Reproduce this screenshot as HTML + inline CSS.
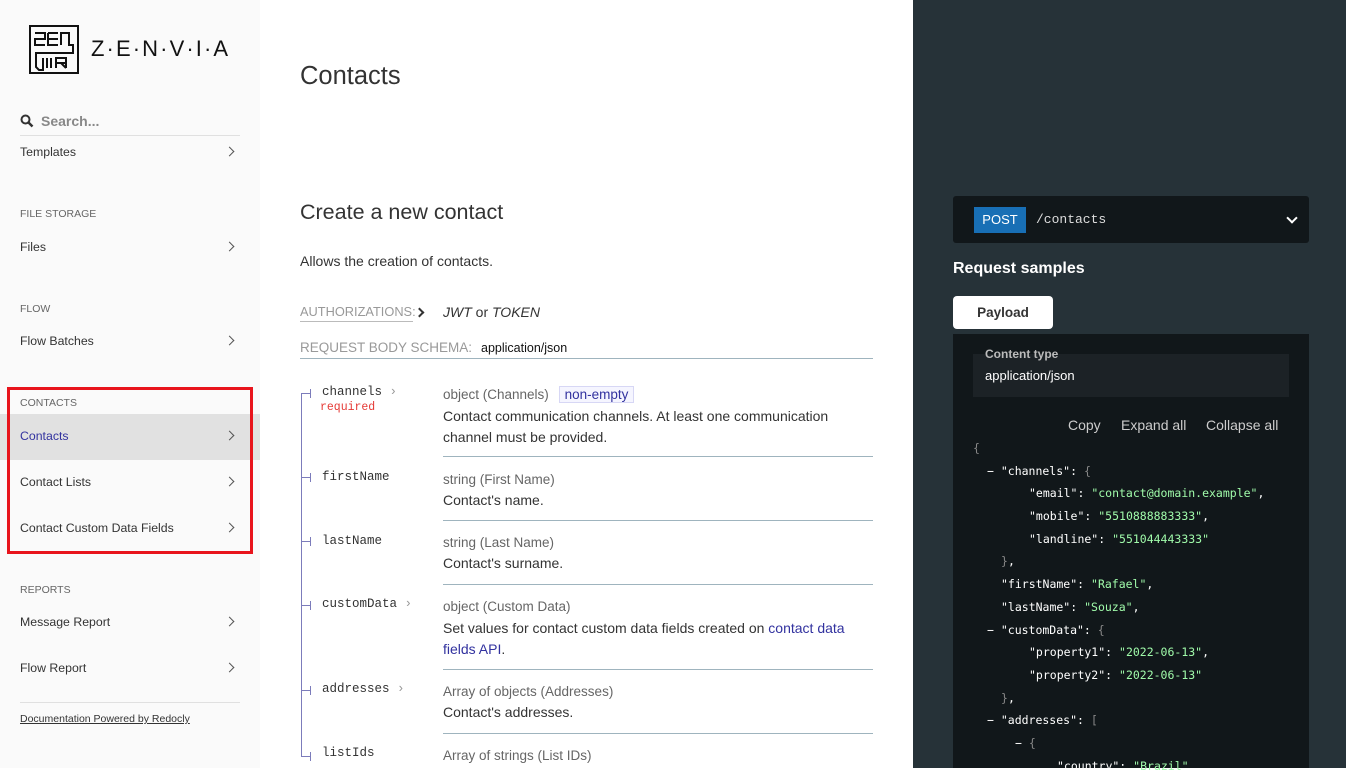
<!DOCTYPE html>
<html><head><meta charset="utf-8"><style>
*{margin:0;padding:0;box-sizing:border-box}
body{width:1346px;height:768px;overflow:hidden;position:relative;font-family:"Liberation Sans",Arial,sans-serif;background:#fff}
.a{position:absolute;white-space:nowrap}
#side{position:absolute;left:0;top:0;width:260px;height:768px;background:#fafafa}
#right{position:absolute;left:913px;top:0;width:433px;height:768px;background:#263238}
.nav{font-size:12.3px;color:#333}
.hdr{font-size:10.5px;color:#666}
.chev{position:absolute;left:226px;width:7px;height:7px;border-right:1.5px solid #555;border-top:1.5px solid #555;transform:rotate(45deg)}
.mono{font-family:"Liberation Mono",monospace}
.pn{font-family:"Liberation Mono",monospace;font-size:12.5px;color:#333}
.ty{font-size:13.5px;color:#666}
.ds{font-size:14px;color:#333}
.hl{position:absolute;left:443px;width:430px;height:1px;background:#9fb4be}
.tick{position:absolute;left:301px;width:10px;height:1px;background:#7c7cbb}
.tick:after{content:"";position:absolute;right:0;top:-4px;width:1px;height:9px;background:#7c7cbb}
.code{font-family:"DejaVu Sans Mono",monospace;font-size:11.5px;color:#fff}
.code div{height:22.7px;line-height:22.7px;position:relative}
.s{color:#a0fbaa}
.p{color:#888}
</style></head><body>
<div id="side">
<svg class="a" style="left:29px;top:25px" width="50" height="49" viewBox="0 0 50 49">
<rect x="1" y="1" width="48" height="47" fill="none" stroke="#111" stroke-width="2"/>
<g fill="none" stroke="#111" stroke-width="2">
<path d="M6 8h10v6H6v6h10"/><path d="M19 8h10M19 14h10M19 8v12h10"/><path d="M32 20V8h8v12h4v8H7v14l3 3h4V33"/>
<path d="M18 33v10M22 33v10"/><path d="M27 43V33h10v10M27 38h10M32 38l5 5"/>
</g></svg>
<div class="a" style="left:91px;top:36px;font-size:22px;letter-spacing:2.1px;color:#111">Z·E·N·V·I·A</div>
<svg class="a" style="left:20px;top:114px" width="14" height="14" viewBox="0 0 14 14"><circle cx="5.5" cy="5.5" r="4" fill="none" stroke="#333" stroke-width="2"/><path d="M8.5 8.5l4 4" stroke="#333" stroke-width="2.5"/></svg>
<div class="a" style="left:41px;top:113px;font-size:14px;color:#888;font-weight:bold">Search...</div>
<div class="a" style="left:20px;top:135px;width:220px;height:1px;background:#e0e0e0"></div>
<div class="a nav" style="left:20px;top:145px">Templates</div><div class="chev" style="top:148px"></div>
<div class="a hdr" style="left:20px;top:208px">FILE STORAGE</div>
<div class="a nav" style="left:20px;top:240px">Files</div><div class="chev" style="top:243px"></div>
<div class="a hdr" style="left:20px;top:303px">FLOW</div>
<div class="a nav" style="left:20px;top:334px">Flow Batches</div><div class="chev" style="top:337px"></div>
<div class="a hdr" style="left:20px;top:397px">CONTACTS</div>
<div class="a" style="left:0;top:414px;width:260px;height:46px;background:#e1e1e1"></div>
<div class="a nav" style="left:20px;top:429px;color:#32329f">Contacts</div><div class="chev" style="top:432px"></div>
<div class="a nav" style="left:20px;top:475px">Contact Lists</div><div class="chev" style="top:478px"></div>
<div class="a nav" style="left:20px;top:521px">Contact Custom Data Fields</div><div class="chev" style="top:524px"></div>
<div class="a" style="left:7px;top:387px;width:246px;height:167px;border:3px solid #e8141c"></div>
<div class="a hdr" style="left:20px;top:584px">REPORTS</div>
<div class="a nav" style="left:20px;top:615px">Message Report</div><div class="chev" style="top:618px"></div>
<div class="a nav" style="left:20px;top:661px">Flow Report</div><div class="chev" style="top:664px"></div>
<div class="a" style="left:20px;top:702px;width:220px;height:1px;background:#e0e0e0"></div>
<div class="a" style="left:20px;top:713px;font-size:10.5px;color:#333;text-decoration:underline">Documentation Powered by Redocly</div>
</div>

<div class="a" style="left:300px;top:62px;font-size:25.5px;color:#333">Contacts</div>
<div class="a" style="left:300px;top:200px;font-size:21.5px;color:#333">Create a new contact</div>
<div class="a" style="left:300px;top:253px;font-size:14px;color:#333">Allows the creation of contacts.</div>
<div class="a" style="left:300px;top:304px;font-size:12.8px;color:#999;border-bottom:1px solid #bbb;padding-bottom:2px;width:113px">AUTHORIZATIONS:</div>
<div class="a" style="left:416px;top:309px;width:7px;height:7px;border-right:2px solid #333;border-top:2px solid #333;transform:rotate(45deg)"></div>
<div class="a" style="left:443px;top:304px;font-size:14px;color:#333"><i>JWT</i> or <i>TOKEN</i></div>
<div class="a" style="left:300px;top:340px;font-size:13.5px;color:#999">REQUEST BODY SCHEMA:</div>
<div class="a" style="left:481px;top:341px;font-size:12.5px;color:#111">application/json</div>
<div class="a" style="left:300px;top:358px;width:573px;height:1px;background:#9fb4be"></div>

<div class="a" style="left:301px;top:393px;width:1px;height:364px;background:#7c7cbb"></div>
<div class="tick" style="top:393px"></div>
<div class="a pn" style="left:322px;top:385px">channels <span style="color:#999">›</span></div>
<div class="a mono" style="left:320px;top:401px;font-size:11.5px;color:#e53935">required</div>
<div class="a ty" style="left:443px;top:387px">object (Channels) <span style="margin-left:6px;border:1px solid #d7d7f5;background:#f5f5ff;color:#32329f;padding:0 5px">non-empty</span></div>
<div class="a ds" style="left:443px;top:406px;line-height:21px;white-space:normal;width:420px">Contact communication channels. At least one communication channel must be provided.</div>
<div class="hl" style="top:456px"></div>
<div class="tick" style="top:477px"></div>
<div class="a pn" style="left:322px;top:470px">firstName</div>
<div class="a ty" style="left:443px;top:472px">string (First Name)</div>
<div class="a ds" style="left:443px;top:492px">Contact's name.</div>
<div class="hl" style="top:520px"></div>
<div class="tick" style="top:541px"></div>
<div class="a pn" style="left:322px;top:534px">lastName</div>
<div class="a ty" style="left:443px;top:535px">string (Last Name)</div>
<div class="a ds" style="left:443px;top:555px">Contact's surname.</div>
<div class="hl" style="top:584px"></div>
<div class="tick" style="top:605px"></div>
<div class="a pn" style="left:322px;top:597px">customData <span style="color:#999">›</span></div>
<div class="a ty" style="left:443px;top:599px">object (Custom Data)</div>
<div class="a ds" style="left:443px;top:618px;line-height:21px;white-space:normal;width:420px">Set values for contact custom data fields created on <span style="color:#32329f">contact data fields API</span>.</div>
<div class="hl" style="top:669px"></div>
<div class="tick" style="top:690px"></div>
<div class="a pn" style="left:322px;top:682px">addresses <span style="color:#999">›</span></div>
<div class="a ty" style="left:443px;top:684px">Array of objects (Addresses)</div>
<div class="a ds" style="left:443px;top:704px">Contact's addresses.</div>
<div class="hl" style="top:733px"></div>
<div class="tick" style="top:756px"></div>
<div class="a pn" style="left:322px;top:746px">listIds</div>
<div class="a ty" style="left:443px;top:748px">Array of strings (List IDs)</div>

<div id="right"></div>
<div class="a" style="left:953px;top:196px;width:356px;height:47px;background:#11171a;border-radius:3px"></div>
<div class="a" style="left:974px;top:207px;width:52px;height:26px;background:#186fb5;color:#fff;font-size:13px;text-align:center;line-height:26px">POST</div>
<div class="a mono" style="left:1036px;top:212px;font-size:13px;color:#ddd">/contacts</div>
<div class="a" style="left:1288px;top:214px;width:8px;height:8px;border-right:2px solid #fff;border-bottom:2px solid #fff;transform:rotate(45deg)"></div>
<div class="a" style="left:953px;top:260px;font-size:16px;font-weight:bold;color:#fff">Request samples</div>
<div class="a" style="left:953px;top:296px;width:100px;height:33px;background:#fff;border-radius:4px;text-align:center;line-height:33px;font-size:13.5px;font-weight:bold;color:#333">Payload</div>
<div class="a" style="left:953px;top:334px;width:356px;height:434px;background:#11171a"></div>
<div class="a" style="left:973px;top:354px;width:316px;height:43px;background:#1c2226"></div>
<div class="a" style="left:985px;top:347px;font-size:12px;font-weight:bold;color:#bbb">Content type</div>
<div class="a" style="left:985px;top:368px;font-size:13px;color:#fff">application/json</div>
<div class="a" style="left:1068px;top:417px;font-size:14px;color:#ccc">Copy</div>
<div class="a" style="left:1121px;top:417px;font-size:14px;color:#ccc">Expand all</div>
<div class="a" style="left:1206px;top:417px;font-size:14px;color:#ccc">Collapse all</div>
<div class="a code" style="left:973px;top:437px">
<div><span class="p">{</span></div>
<div style="left:14px">− "channels": <span class="p">{</span></div>
<div style="left:56px">"email": <span class="s">"contact@domain.example"</span>,</div>
<div style="left:56px">"mobile": <span class="s">"5510888883333"</span>,</div>
<div style="left:56px">"landline": <span class="s">"551044443333"</span></div>
<div style="left:28px"><span class="p">}</span>,</div>
<div style="left:28px">"firstName": <span class="s">"Rafael"</span>,</div>
<div style="left:28px">"lastName": <span class="s">"Souza"</span>,</div>
<div style="left:14px">− "customData": <span class="p">{</span></div>
<div style="left:56px">"property1": <span class="s">"2022-06-13"</span>,</div>
<div style="left:56px">"property2": <span class="s">"2022-06-13"</span></div>
<div style="left:28px"><span class="p">}</span>,</div>
<div style="left:14px">− "addresses": <span class="p">[</span></div>
<div style="left:42px">− <span class="p">{</span></div>
<div style="left:84px">"country": <span class="s">"Brazil"</span>,</div>
</div>
</body></html>
